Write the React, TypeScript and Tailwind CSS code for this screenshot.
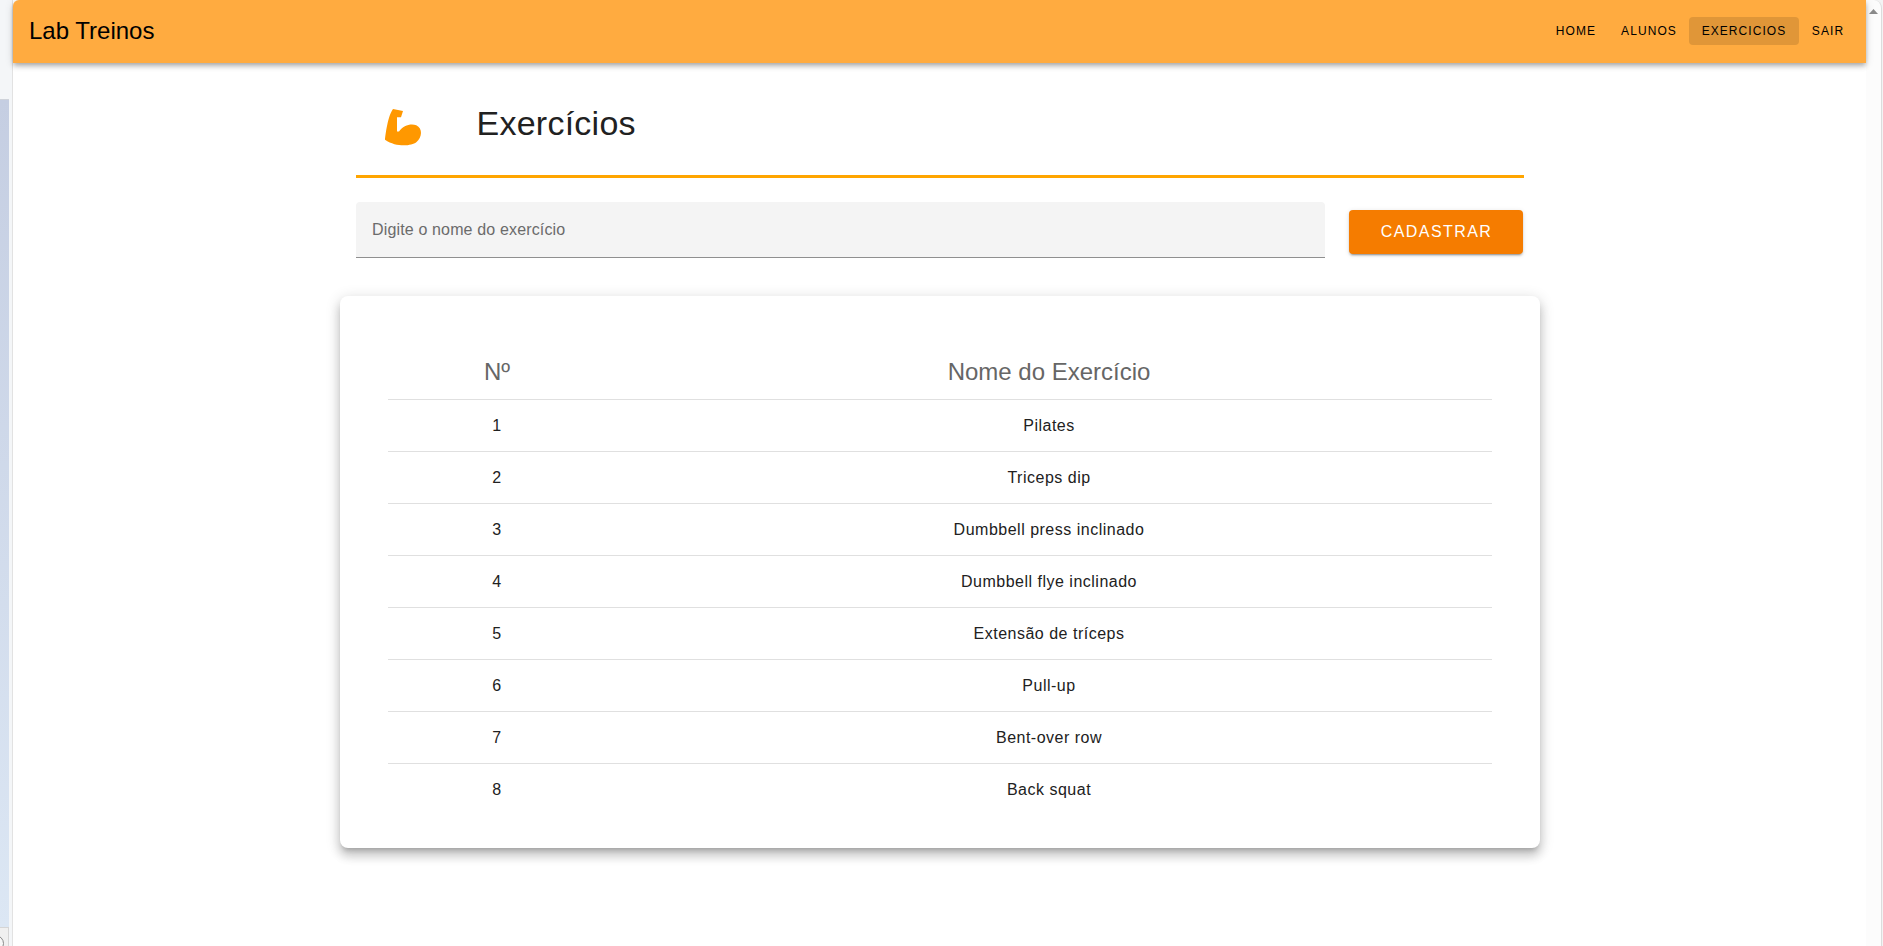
const navItems = [
  { label: "HOME", style: "w-[65px] pr-px" },
  { label: "ALUNOS", style: "w-[80px]" },
  { label: "EXERCICIOS", style: "w-[110px] bg-[#e09638]" },
  { label: "SAIR", style: "w-[57px] pl-px" },
];

const exercises = [
  "Pilates",
  "Triceps dip",
  "Dumbbell press inclinado",
  "Dumbbell flye inclinado",
  "Extensão de tríceps",
  "Pull-up",
  "Bent-over row",
  "Back squat",
];

function LeftEdge() {
  return (
    <div className="flex w-[13px] shrink-0 flex-col border-r border-[#e2e2e2] bg-[#f4f6f8]">
      <div className="h-[99px]" />
      <div className="h-[828px] w-[9px] border-t border-[#cfd3da] bg-linear-to-b from-[#c5cee2] to-[#dce7f4]" />
      <div className="relative h-[19px] w-[9px] overflow-hidden border-t border-r border-[#d5d5d5] bg-[#f0f0f0]">
        <div className="absolute top-[7px] -left-[13px] size-[17px] rounded-full border border-[#8a8a8a] bg-[#f7f7f7]" />
      </div>
    </div>
  );
}

function AppBar() {
  return (
    <header className="z-10 flex h-[63px] shrink-0 items-center justify-between rounded-tl-[6px] bg-[#ffab40] pr-[10px] pb-px pl-4 shadow-[0_2px_4px_-1px_rgba(0,0,0,0.2),0_4px_5px_0_rgba(0,0,0,0.14),0_1px_10px_0_rgba(0,0,0,0.12)]">
      <div className="text-2xl text-black">Lab Treinos</div>
      <nav className="flex">
        {navItems.map(({ label, style }) => (
          <button
            key={label}
            className={`h-7 rounded text-center text-xs tracking-[0.0892857em] text-black ${style}`}
          >
            {label}
          </button>
        ))}
      </nav>
    </header>
  );
}

function ArmIcon() {
  return (
    <svg viewBox="0 0 24 24" className="size-12 fill-[#ff9800]">
      <path d="M3 18.34C3 18.34 4 7.09 7 3L12 4L11 7.09H9V14.25H10C12 11.18 16.14 10.06 18.64 11.18C21.94 12.71 21.64 17.32 18.64 19.6C16.24 21.39 9 22.43 3 18.34Z" />
    </svg>
  );
}

export default function App() {
  return (
    <div className="flex h-[946px] w-full overflow-hidden bg-white font-['Liberation_Sans',Arial,sans-serif]">
      <LeftEdge />
      <div className="flex min-w-0 flex-1 flex-col">
        <AppBar />
        <main className="mx-auto w-[1200px]">
          <div className="px-4">
            <div className="flex h-[115px] items-start border-b-3 border-[#ffa500] pt-10 pl-[23px]">
              <ArmIcon />
              <h1 className="ml-[50px] text-[34px] leading-10 tracking-[0.0073529em] text-[#212121]">
                Exercícios
              </h1>
            </div>
            <div className="mt-6 flex items-center">
              <input
                placeholder="Digite o nome do exercício"
                className="h-14 w-[969px] rounded-t border-b border-[#8f8f8f] bg-[#f4f4f4] px-[16.5px] text-base tracking-[0.009375em] outline-none placeholder:text-[#6b6b6b]"
              />
              <button className="mt-1 ml-6 h-11 w-[174px] rounded bg-[#f57c00] pl-0.5 text-base tracking-[0.0892857em] text-white shadow-[0_3px_1px_-2px_rgba(0,0,0,0.2),0_2px_2px_0_rgba(0,0,0,0.14),0_1px_5px_0_rgba(0,0,0,0.12)]">
                CADASTRAR
              </button>
            </div>
          </div>
          <section className="mt-[38px] h-[552px] rounded-lg bg-white px-12 pt-12 shadow-[0_5px_5px_-3px_rgba(0,0,0,0.2),0_8px_10px_1px_rgba(0,0,0,0.14),0_3px_14px_2px_rgba(0,0,0,0.12)]">
            <table className="w-full table-fixed border-separate border-spacing-0 text-center">
              <thead>
                <tr className="h-14 text-2xl text-[#666666]">
                  <th className="w-[218px] border-b border-[#e0e0e0] p-0 pl-px font-normal">Nº</th>
                  <th className="border-b border-[#e0e0e0] p-0 pl-px font-normal">Nome do Exercício</th>
                </tr>
              </thead>
              <tbody className="text-base tracking-[0.03125em] text-[#212121]">
                {exercises.map((name, index) => (
                  <tr key={name} className="group h-[52px]">
                    <td className="border-b border-[#e0e0e0] p-0 pl-px group-last:border-b-0">{index + 1}</td>
                    <td className="border-b border-[#e0e0e0] p-0 pl-px group-last:border-b-0">{name}</td>
                  </tr>
                ))}
              </tbody>
            </table>
          </section>
        </main>
      </div>
      <div className="flex w-[17px] shrink-0 bg-[#f3f3f3]">
        <div className="h-full w-4 rounded-tr-[8px] border-r border-[#dcdcdc] bg-[#fcfcfc] pt-[9px] pl-[3px]">
          <svg viewBox="0 0 9 5" className="h-[5px] w-[9px] fill-[#8b8b8b]">
            <path d="M4.5 0L9 5H0Z" />
          </svg>
        </div>
      </div>
    </div>
  );
}
